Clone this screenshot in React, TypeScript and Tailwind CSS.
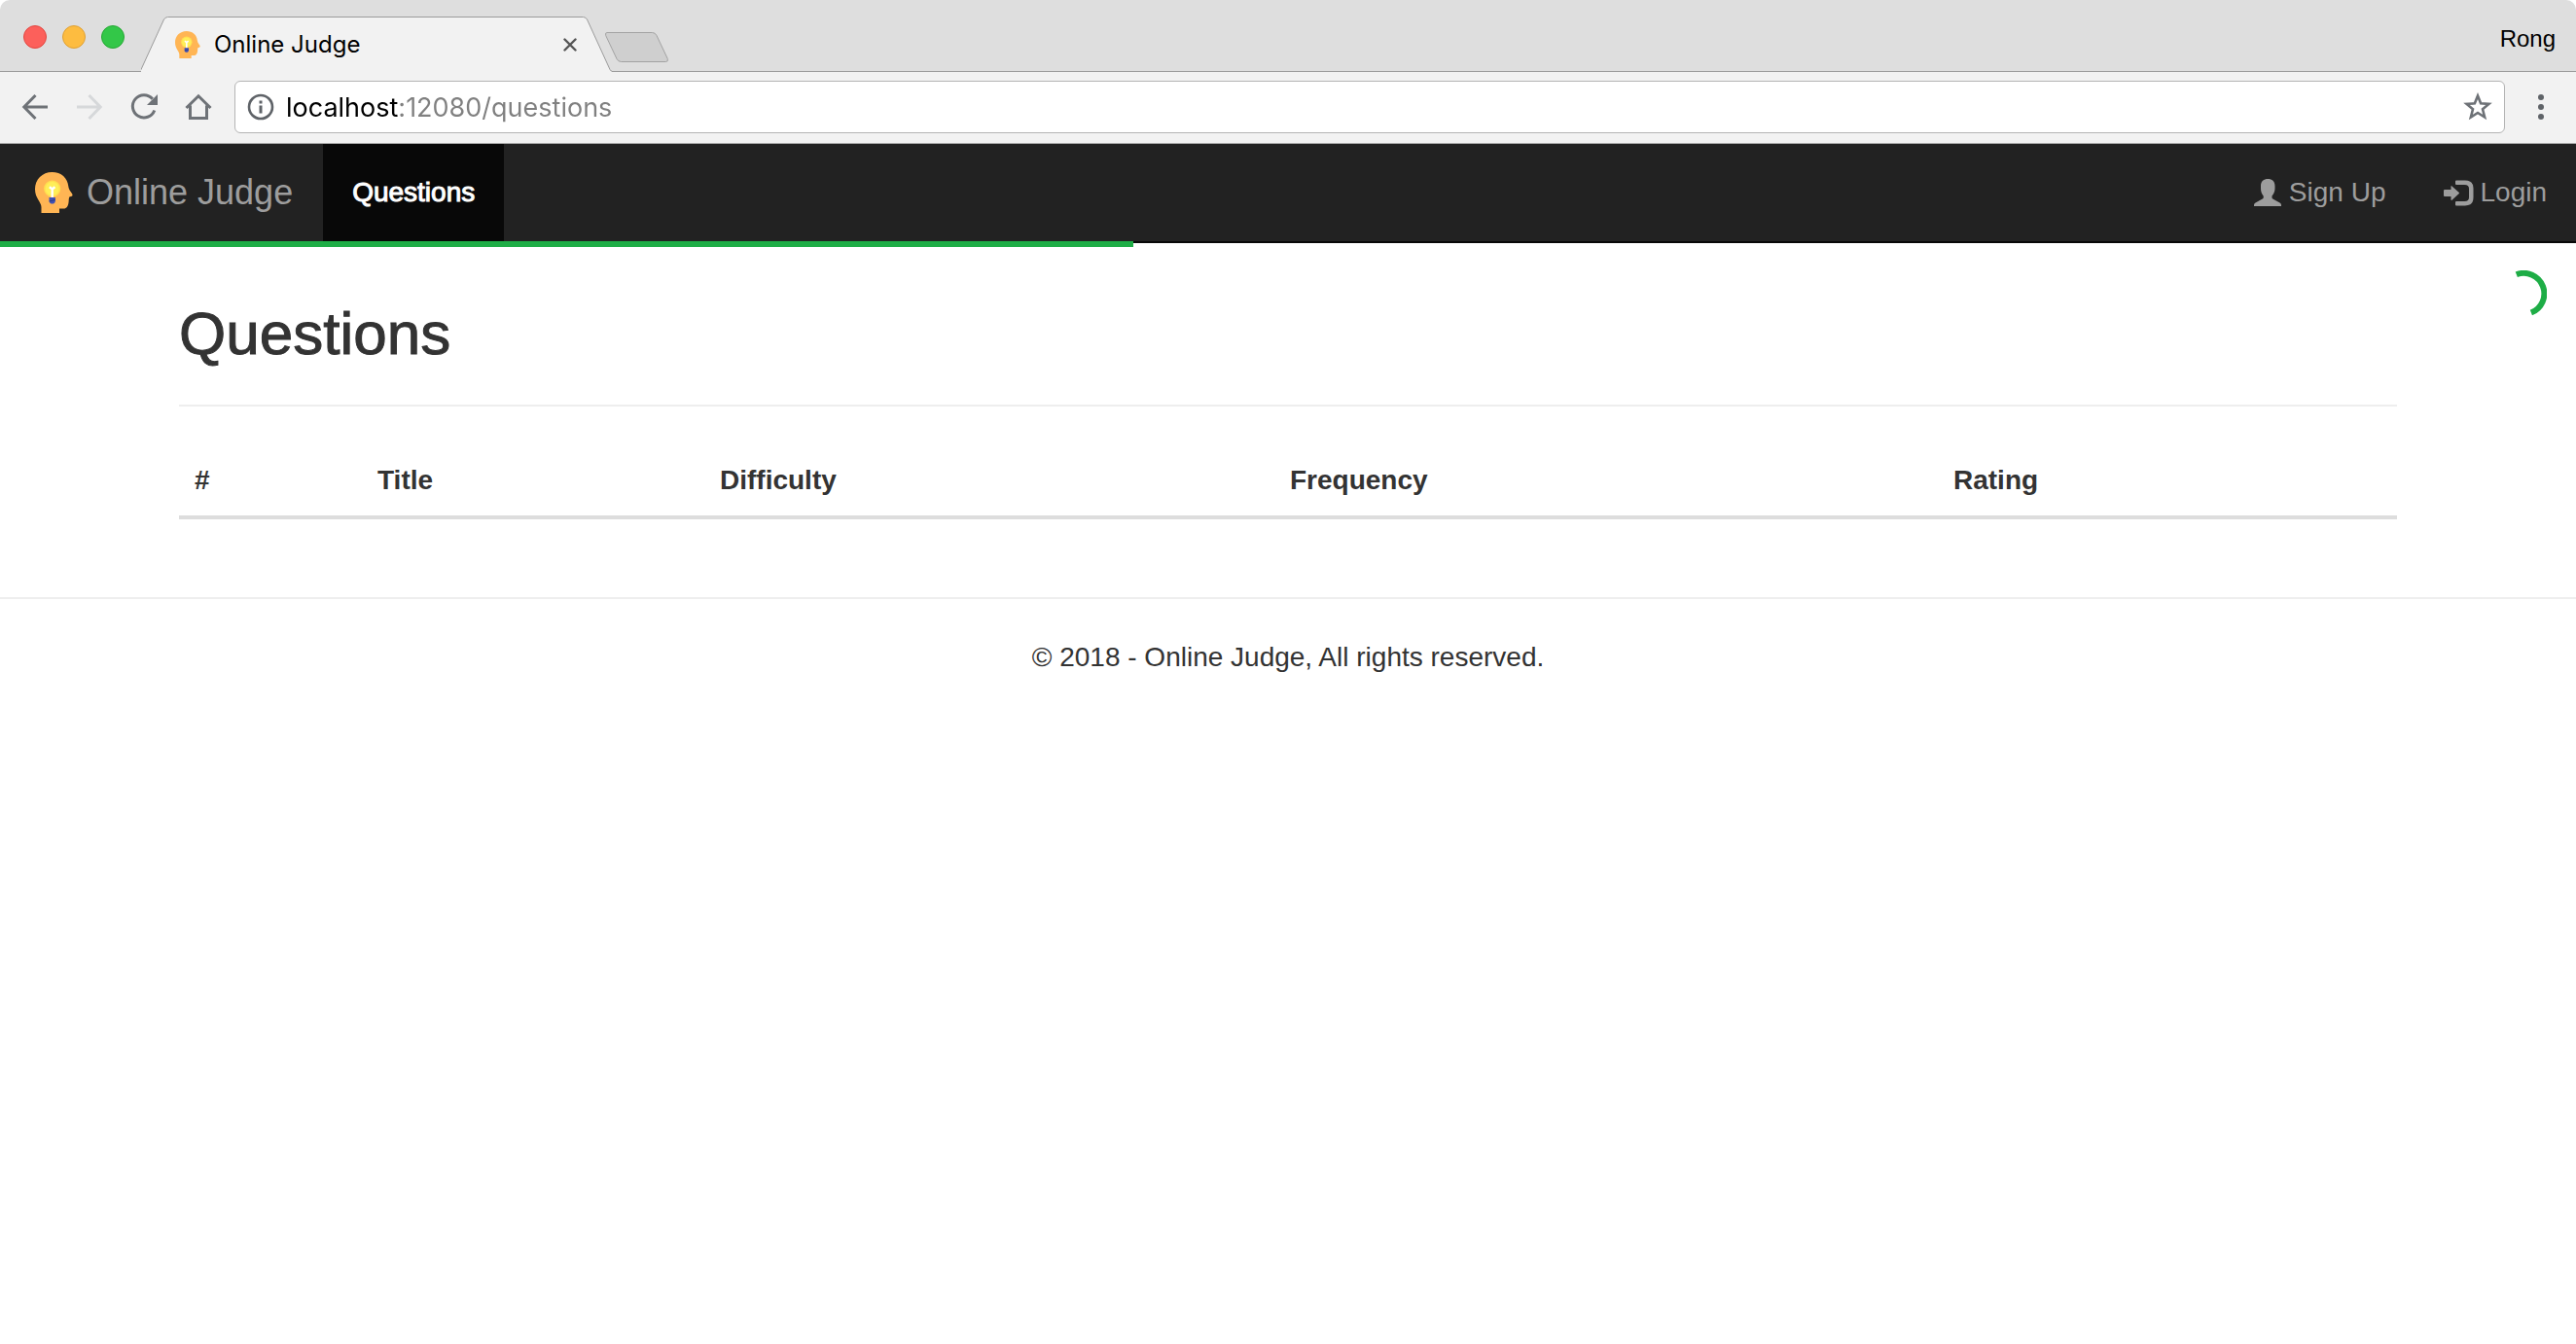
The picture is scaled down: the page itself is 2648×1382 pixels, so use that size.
import React from "react";

function HeadLogo({ className }: { className: string }) {
  return (
    <svg viewBox="0 0 39 42" className={className} aria-hidden="true">
      <path
        d="M17.500 0C27 0 33.500 6 34.300 14.500C34.500 16.500 35.500 18.500 36.800 20.300C38 22 39 23 38.400 24.200C37.800 25.200 36.200 25 35.300 25.600C34.400 27.500 35 29.500 34.400 32C33.800 35 32.500 37.500 29.500 37.500H25V42H6.500V36C6.500 30.500 0 27 0 17.500C0 7.500 7.500 0 17.500 0Z"
        fill="#ffb554"
      />
      <circle cx="17.700" cy="17" r="8.600" fill="#ffdf50" />
      <circle cx="17.700" cy="17" r="7" fill="#ffee58" />
      <path d="M14.900 15.300L17.700 17.500L20.500 15.300M17.700 17V26" fill="none" stroke="#fff" strokeWidth="2.400" />
      <path d="M14.500 26H20.900V29.500C20.900 31.500 19.500 32.600 17.700 32.600C15.900 32.600 14.500 31.500 14.500 29.500Z" fill="#3f51b5" />
      <path d="M14.700 30L20.700 28.500" stroke="#2c3a80" strokeWidth="1" />
    </svg>
  );
}

function TrafficLights() {
  return (
    <div className="flex w-[145px] items-center gap-4 self-stretch pl-6 pt-[3px]">
      <button aria-label="Close window" className="size-6 rounded-full border border-[#e2463f] bg-[#fc605b]" />
      <button aria-label="Minimize window" className="size-6 rounded-full border border-[#dfa033] bg-[#fdbc40]" />
      <button aria-label="Zoom window" className="size-6 rounded-full border border-[#24a732] bg-[#33c748]" />
    </div>
  );
}

function TabStrip() {
  return (
    <div className="flex h-[74px] items-end rounded-t-[10px] border-b border-[#9b9b9b] bg-[#dedede]">
      <TrafficLights />
      <div className="relative -mb-px h-[57px] w-[484px]">
        <svg viewBox="0 0 484 57" className="absolute inset-0 size-full" aria-hidden="true">
          <path
            d="M-2 56.500Q-1 56.500 0 54.500L23.500 3Q25 .5 27.500 .5H454.500Q457 .5 458.500 3L482 54.500Q483 56.500 485 56.500V58H-2Z"
            fill="#f2f2f2"
          />
          <path
            d="M-2 56.500Q-1 56.500 0 54.500L23.500 3Q25 .5 27.500 .5H454.500Q457 .5 458.500 3L482 54.500Q483 56.500 485 56.500"
            fill="none"
            stroke="#9b9b9b"
          />
        </svg>
        <div className="relative flex h-full items-center pl-[35px] pr-9">
          <HeadLogo className="h-7 w-[26px]" />
          <span className="ml-[14px] flex-1 font-['Inter','Liberation_Sans',sans-serif] text-2xl text-black">Online Judge</span>
          <button aria-label="Close tab">
            <svg viewBox="0 0 14 14" className="size-[14px]">
              <path d="M1.500 1.500L12.500 12.500M12.500 1.500L1.500 12.500" stroke="#555" strokeWidth="2.400" strokeLinecap="round" />
            </svg>
          </button>
        </div>
      </div>
      <button aria-label="New tab" className="mb-2 ml-[-8px]">
        <svg viewBox="0 0 67 32" className="h-8 w-[67px]">
          <path
            d="M3 .5H49.500Q52.500 .5 54 3.500L65.300 27.500Q66 30.500 63.500 30.500H17.500Q14.500 30.500 13 27.500L1.700 3.500Q.8 .5 3 .5Z"
            fill="#cfcfcf"
            stroke="#a3a3a3"
          />
        </svg>
      </button>
      <button className="mb-[17px] ml-auto mr-[21px] text-2xl text-black">Rong</button>
    </div>
  );
}

function Toolbar() {
  return (
    <div className="flex items-center border-b border-[#a8a8a8] bg-[#f2f2f2] pb-[10px] pl-[22px] pt-[9px]">
      <button aria-label="Back">
        <svg viewBox="0 0 28 28" className="size-7" fill="none" stroke="#6e7277" strokeWidth="3">
          <path d="M14.500 2L2.800 14L14.500 26M3 14H27" />
        </svg>
      </button>
      <button aria-label="Forward" className="ml-7">
        <svg viewBox="0 0 28 28" className="size-7" fill="none" stroke="#d6d8da" strokeWidth="3">
          <path d="M13.500 2L25.200 14L13.500 26M25 14H1" />
        </svg>
      </button>
      <button aria-label="Reload" className="ml-7">
        <svg viewBox="0 0 28 28" className="size-7">
          <path d="M22.800 5.800A11.600 11.600 0 1 0 24.800 17.500" fill="none" stroke="#6e7277" strokeWidth="3" />
          <path d="M28 1V12H17Z" fill="#6e7277" />
        </svg>
      </button>
      <button aria-label="Home" className="ml-7">
        <svg viewBox="0 0 28 28" className="size-7" fill="none" stroke="#6e7277" strokeWidth="3">
          <path d="M1.500 15L14 2.800L26.500 15M5.500 12.500V25.500H22.500V12.500" />
        </svg>
      </button>
      <div className="ml-[23px] flex h-[54px] flex-1 items-center rounded-md border border-[#b4b4b4] bg-white px-3">
        <svg viewBox="0 0 28 28" className="size-7" aria-hidden="true">
          <circle cx="14" cy="14" r="12" fill="none" stroke="#5f6368" strokeWidth="2.600" />
          <path d="M14 7.500V10.500M14 12.500V20.500" stroke="#5f6368" strokeWidth="3" />
        </svg>
        <input
          aria-label="Address"
          defaultValue="localhost:12080/questions"
          className="ml-3 min-w-0 flex-1 bg-linear-to-r from-black from-[116px] to-[#808080] to-[116px] bg-clip-text pt-[2px] font-['Inter','Liberation_Sans',sans-serif] text-[27px] leading-10 text-transparent outline-none"
        />
        <button aria-label="Bookmark this page">
          <svg viewBox="0 0 30 30" className="size-[30px]">
            <path
              d="M15 3.500L18.100 11.300L26.500 11.900L20 17.300L22.100 25.500L15 21L7.900 25.500L10 17.300L3.500 11.900L11.900 11.300Z"
              fill="none"
              stroke="#6e7277"
              strokeWidth="2.600"
            />
          </svg>
        </button>
      </div>
      <button aria-label="Menu" className="pl-[34px] pr-[33px]">
        <svg viewBox="0 0 6 28" className="h-7 w-[6px]" fill="#5f6368">
          <circle cx="3" cy="4" r="3" />
          <circle cx="3" cy="14" r="3" />
          <circle cx="3" cy="24" r="3" />
        </svg>
      </button>
    </div>
  );
}

function Navbar() {
  return (
    <nav className="relative flex items-stretch border-b-2 border-[#080808] bg-[#222] text-[28px] leading-10 text-[#9d9d9d]">
      <a href="#home" className="flex items-center gap-[14px] pl-9 pr-[31px] text-4xl">
        <HeadLogo className="h-[42px] w-[39px]" />
        Online Judge
      </a>
      <a href="#questions" className="bg-[#080808] px-[30px] py-[30px] text-white [-webkit-text-stroke:1px_#fff]">
        Questions
      </a>
      <div className="ml-auto flex">
        <a href="#signup" className="flex items-center gap-2 px-[30px]">
          <svg viewBox="0 0 28 28" className="size-7" fill="currentColor" aria-hidden="true">
            <path d="M14.300 0C18.500 0 21.500 2.500 21.500 7V10C21.500 13 20 16 18.500 17.500V19.300Q18.500 20 19.300 20.500L26.500 24.500Q28 25.500 28 26.800V28H0V26.800Q0 25.500 1.500 24.500L8.700 20.500Q9.700 20 9.700 19.300V17.500C8.200 16 7 13 7 10V7C7 2.500 10 0 14.300 0Z" />
          </svg>
          Sign Up
        </a>
        <a href="#login" className="flex items-center gap-[6px] px-[30px]">
          <svg viewBox="0 0 31 28" className="h-7 w-[31px]" fill="currentColor" aria-hidden="true">
            <path d="M12 2.500Q12 1.500 13 1.500H22Q30.500 1.500 30.500 9.500V19Q30.500 27.500 22 27.500H13Q12 27.500 12 26.500V24Q12 23 13 23H21.500Q26 23 26 19V10Q26 6 21.500 6H13Q12 6 12 5Z" />
            <path d="M0 12Q0 11 1 11H7.500V7.800Q7.500 6.500 8.500 7.500L15.800 14Q16.300 14.500 15.800 15L8.500 21.800Q7.500 22.500 7.500 21.300V18H1Q0 18 0 17Z" />
          </svg>
          Login
        </a>
      </div>
      <div role="progressbar" aria-label="Loading" className="absolute left-0 top-full h-[6px] w-[44%] bg-[#1ead46]" />
      <svg viewBox="0 0 48 48" className="absolute right-[30px] top-[130px] size-12" aria-hidden="true">
        <path d="M16.800 4.300A21 21 0 0 1 31.900 43.500" fill="none" stroke="#1ead46" strokeWidth="6" />
      </svg>
    </nav>
  );
}

const columns = [
  { name: "#", width: "w-[188px]" },
  { name: "Title", width: "w-[352px]" },
  { name: "Difficulty", width: "w-[586px]" },
  { name: "Frequency", width: "w-[682px]" },
  { name: "Rating", width: "w-[472px]" },
];

export default function App() {
  return (
    <div className="min-h-screen bg-white font-['Liberation_Sans',Arial,sans-serif] text-[28px] leading-10 text-[#333]">
      <header>
        <TabStrip />
        <Toolbar />
      </header>
      <Navbar />
      <main className="mx-auto max-w-[2340px] px-[30px] pt-[60px]">
        <h1 className="text-[62px] leading-[66px] [-webkit-text-stroke:1px_#333]">Questions</h1>
        <hr className="my-10 border-t-2 border-[#eee]" />
        <table className="mb-20 w-full border-collapse">
          <thead>
            <tr className="border-b-4 border-[#ddd]">
              {columns.map(({ name, width }) => (
                <th key={name} className={`${width} p-4 text-left font-bold`}>
                  {name}
                </th>
              ))}
            </tr>
          </thead>
        </table>
      </main>
      <footer className="border-t-2 border-[#eee] pt-10 text-center">
        <p>© 2018 - Online Judge, All rights reserved.</p>
      </footer>
    </div>
  );
}
